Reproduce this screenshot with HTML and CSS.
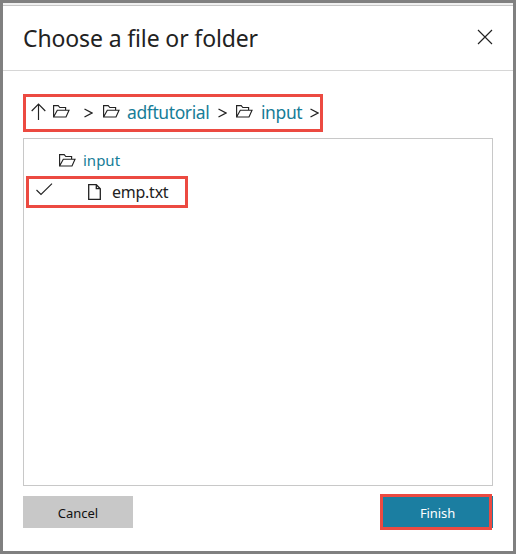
FILE: index.html
```html
<!DOCTYPE html>
<html lang="en">
<head>
<meta charset="utf-8">
<title>Choose a file or folder</title>
<link rel="stylesheet" href="styles.css">
</head>
<body>
<svg class="defs" width="0" height="0">
  <symbol id="folder" viewBox="0 0 17 13">
    <path d="M.6 12V.6H5.2L6.8 2.5H12.6V5.2M.6 12L4.3 5.2H16L13 12Z"/>
  </symbol>
</svg>
<main class="dialog">
  <header class="header">
    <h1 class="title">Choose a file or folder</h1>
    <svg class="close" viewBox="0 0 16 16"><path d="M1 1L15 15M15 1L1 15"/></svg>
  </header>
  <nav class="crumbs">
    <svg class="up" viewBox="0 0 16 17"><path d="M7.5 17V1M.7 8L7.5 1L14.3 8"/></svg>
    <svg class="folder"><use href="#folder"/></svg>
    <svg class="sep sep-root" viewBox="0 0 9 10"><path d="M.5 1L8 5L.5 9"/></svg>
    <svg class="folder"><use href="#folder"/></svg>
    <a class="link link-account">adftutorial</a>
    <svg class="sep" viewBox="0 0 9 10"><path d="M.5 1L8 5L.5 9"/></svg>
    <svg class="folder"><use href="#folder"/></svg>
    <a class="link link-input">input</a>
    <svg class="sep" viewBox="0 0 9 10"><path d="M.5 1L8 5L.5 9"/></svg>
  </nav>
  <section class="list">
    <div class="row parent">
      <svg class="folder"><use href="#folder"/></svg>
      <a class="parent-name">input</a>
    </div>
    <div class="row selected">
      <svg class="check" viewBox="0 0 17 13"><path d="M.5 7L5 11.5L16 .7"/></svg>
      <svg class="file" viewBox="0 0 13 16"><path d="M.7 .7H8.3L12.3 4.7V15.3H.7ZM8.3 .7V4.7H12.3"/></svg>
      <span class="file-name">emp.txt</span>
    </div>
  </section>
  <footer class="footer">
    <button class="button cancel"><span>Cancel</span></button>
    <button class="button finish"><span>Finish</span></button>
  </footer>
</main>
</body>
</html>
```
FILE: styles.css
```css
* { box-sizing: border-box; }
body {
  margin: 0;
  font-family: "Noto Sans", "Open Sans", sans-serif;
  color: #222;
}
svg { flex: none; fill: none; stroke: #222; stroke-width: 1.15; }
.defs { position: absolute; }
.dialog {
  width: 516px;
  height: 554px;
  border: 3px solid #808080;
  background: #fff;
}
.header {
  height: 68px;
  border-top: 2px solid #f0f0f0;
  border-bottom: 1px solid #d6d6d6;
  box-shadow: inset 0 1px #c6c6c6;
  display: flex;
  align-items: center;
  justify-content: space-between;
  padding: 0 20px;
}
.title {
  margin: 0;
  font-size: 23px;
  font-weight: 400;
  line-height: 32px;
  letter-spacing: -.13px;
  white-space: nowrap;
}
.close { width: 16px; height: 16px; margin-top: -1px; }
.crumbs {
  width: 300px;
  height: 38px;
  margin: 23px 0 0 20px;
  padding-left: 4px;
  border: 3px solid #ec4a41;
  display: flex;
  align-items: center;
}
.up { width: 16px; height: 17px; margin: -3px 6px 0 1px; }
.folder { width: 17px; height: 13px; margin-top: -3px; }
.sep { flex: none; width: 9px; height: 10px; margin-right: 9px; stroke-width: 1.35; }
.sep-root { margin-left: 14px; }
.crumbs .sep-root { margin-right: 10px; }
.link {
  flex: none;
  margin: -2px 0 0 7px;
  font-size: 17.5px;
  line-height: 24px;
  letter-spacing: -.4px;
  color: #177d98;
  white-space: nowrap;
}
.link-account { width: 91px; }
.link-input { width: 49px; margin-left: 8px; }
.list {
  width: 470px;
  height: 348px;
  margin: 6px 0 0 20px;
  border: 1px solid #c8c8c8;
}
.row { display: flex; align-items: center; }
.parent { height: 37px; padding: 7px 0 0 35px; }
.parent .folder { margin-top: -2px; }
.parent-name {
  margin: -3px 0 0 7px;
  font-size: 15px;
  line-height: 22px;
  color: #177d98;
}
.selected {
  width: 162px;
  height: 32px;
  margin-left: 2px;
  border: 3px solid #ec4a41;
  padding-left: 7px;
}
.check { width: 17px; height: 13px; margin-top: -6px; }
.file { width: 13px; height: 16px; margin: -1px 11px 0 35px; stroke-width: 1.3; }
.file-name { font-size: 16px; line-height: 24px; letter-spacing: -.25px; }
.footer {
  display: flex;
  justify-content: space-between;
  align-items: center;
  height: 36px;
  margin: 8px 20px 0;
}
.button {
  border: 0;
  padding: 0;
  font-family: inherit;
  font-size: 13px;
}
.cancel { width: 110px; height: 32px; background: #c8c8c8; color: #111; }
.finish {
  width: 112px;
  height: 36px;
  margin-right: 1px;
  border: 3px solid #ec4a41;
  background: #1b7ea1;
  box-shadow: 3px 0 0 -2px #1b7ea1;
  color: #fff;
}
.button span { display: block; margin-top: 2px; }
.finish span { padding-left: 3px; letter-spacing: -.1px; }
```
